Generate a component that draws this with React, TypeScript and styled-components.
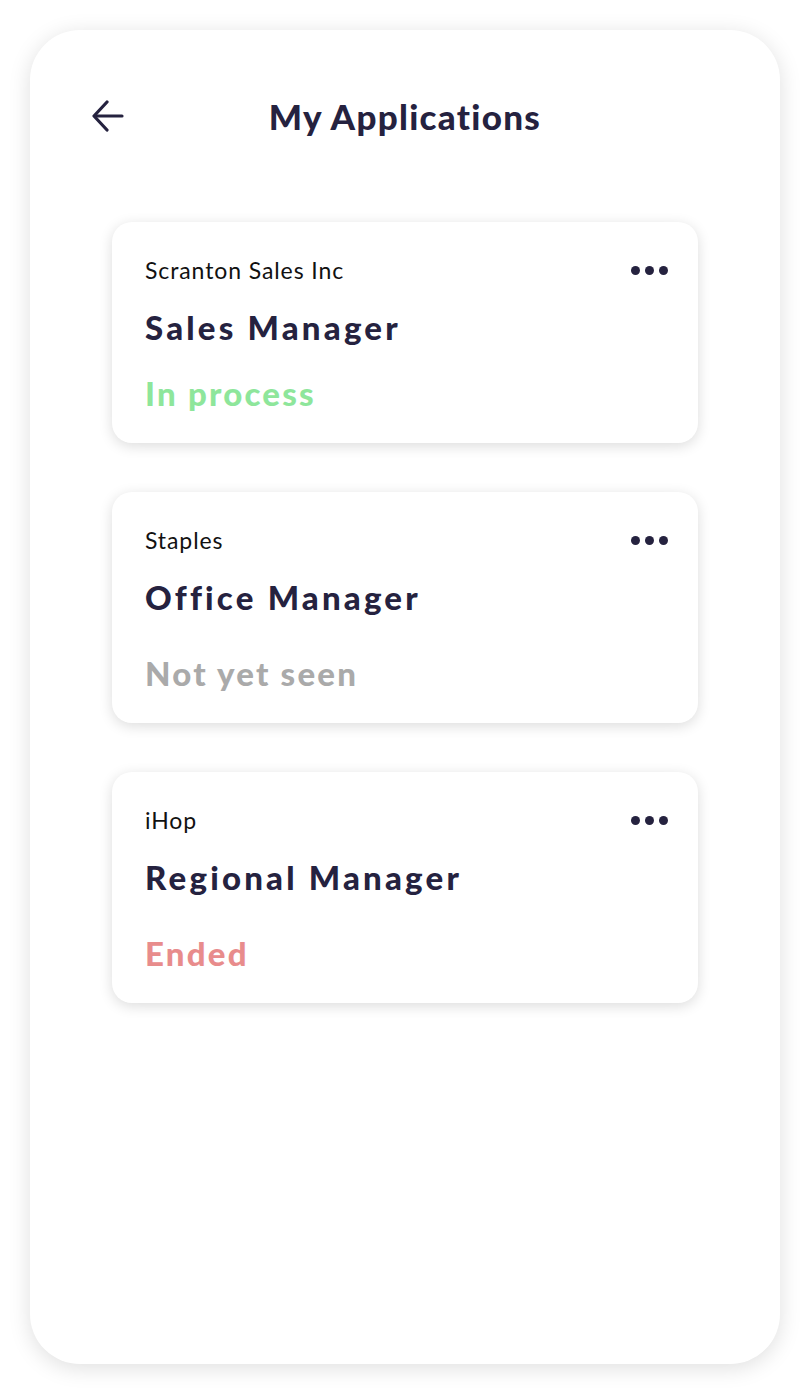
import React from "react";
import styled, {createGlobalStyle} from "styled-components";

const GlobalStyle = createGlobalStyle`
  body {
    margin: 0;
    background: #ffffff;
    font-family: "Lato", "Noto Sans", sans-serif;
  }
`;

const navy = "#25223f";

type Status = "process" | "unseen" | "ended";

const statusColors: Record<Status, string> = {
	process: "#8ee69b",
	unseen: "#aaaaaa",
	ended: "#e88c8c",
};

const Page = styled.div`
  padding: 30px;
  width: 750px;
`;

const Frame = styled.div`
  height: 1334px;
  background: #ffffff;
  border-radius: 50px;
  box-shadow: 0 4px 22px rgba(0, 0, 0, 0.13);
  display: flex;
  flex-direction: column;
`;

const Header = styled.header`
  display: grid;
  grid-template-columns: 1fr auto 1fr;
  align-items: center;
  height: 52px;
  margin-top: 60px;
  padding: 0 62px;
`;

const BackButton = styled.button`
  justify-self: start;
  width: 32px;
  height: 32px;
  padding: 0;
  border: none;
  background: none;
  display: flex;
  align-items: center;
  justify-content: center;
  cursor: pointer;
`;

const Title = styled.h1`
  margin: 0;
  font-size: 35px;
  line-height: 52px;
  font-weight: 900;
  color: ${navy};
  letter-spacing: 1.3px;
`;

const List = styled.div`
  display: flex;
  flex-direction: column;
  gap: 49px;
  margin-top: 80px;
  padding: 0 82px;
`;

const Card = styled.div`
  background: #ffffff;
  border-radius: 20px;
  box-shadow: 0 3px 14px rgba(0, 0, 0, 0.14);
  padding: 34px 30px 31px 33px;
  display: flex;
  flex-direction: column;
`;

const TopRow = styled.div`
  display: flex;
  justify-content: space-between;
  align-items: center;
`;

const Company = styled.span`
  font-size: 23px;
  line-height: 28px;
  letter-spacing: 0.9px;
  color: #111111;
`;

const Dots = styled.div`
  display: flex;
  gap: 5px;
`;

const Dot = styled.span`
  width: 9px;
  height: 9px;
  border-radius: 50%;
  background: ${navy};
`;

const Role = styled.span`
  margin-top: 25px;
  font-size: 33px;
  line-height: 36px;
  font-weight: 900;
  letter-spacing: 3.2px;
  color: ${navy};
`;

const StatusText = styled.span<{ $status: Status; $gap: number }>`
  margin-top: ${({$gap}) => $gap}px;
  font-size: 33px;
  line-height: 38px;
  font-weight: 900;
  letter-spacing: 2.2px;
  color: ${({$status}) => statusColors[$status]};
`;

const applications: { company: string; role: string; status: Status; label: string; gap: number }[] = [
	{company: "Scranton Sales Inc", role: "Sales Manager", status: "process", label: "In process", gap: 29},
	{company: "Staples", role: "Office Manager", status: "unseen", label: "Not yet seen", gap: 39},
	{company: "iHop", role: "Regional Manager", status: "ended", label: "Ended", gap: 39},
];

const BackArrow = () => (
	<svg width="32" height="32" viewBox="0 0 32 32" fill="none" stroke={navy} strokeWidth="3.2" strokeLinecap="round" strokeLinejoin="round">
		<path d="M30 16H3"/>
		<path d="M15 2L2 16l13 14"/>
	</svg>
);

export default function App() {
	return (
		<Page>
			<GlobalStyle/>
			<Frame>
				<Header>
					<BackButton aria-label="Back">
						<BackArrow/>
					</BackButton>
					<Title>My Applications</Title>
					<span/>
				</Header>
				<List>
					{applications.map(app => (
						<Card key={app.company}>
							<TopRow>
								<Company>{app.company}</Company>
								<Dots>
									<Dot/>
									<Dot/>
									<Dot/>
								</Dots>
							</TopRow>
							<Role>{app.role}</Role>
							<StatusText $status={app.status} $gap={app.gap}>{app.label}</StatusText>
						</Card>
					))}
				</List>
			</Frame>
		</Page>
	);
}
